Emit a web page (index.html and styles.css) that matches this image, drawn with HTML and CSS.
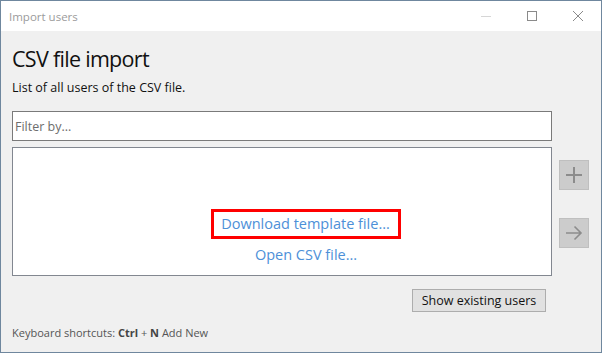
FILE: index.html
```html
<!DOCTYPE html>
<html lang="en">
<head>
  <meta charset="UTF-8" />
  <title>Import users</title>
  <link rel="stylesheet" href="styles.css">
</head>
<body>
  <div class="window">
    <div class="title-bar">
      <span class="title-text">Import users</span>
      <div class="win-controls">
        <span class="win-btn minimize"><svg width="12" height="12" viewBox="0 0 12 12"><line x1="1" y1="6.5" x2="11" y2="6.5" stroke="#d6d6d6" stroke-width="1"/></svg></span>
        <span class="win-btn"><svg width="12" height="12" viewBox="0 0 12 12"><rect x="1.5" y="1.5" width="9" height="9" fill="none" stroke="#8a8a8a" stroke-width="1"/></svg></span>
        <span class="win-btn"><svg width="12" height="12" viewBox="0 0 12 12"><path d="M1 1 L11 11 M11 1 L1 11" stroke="#8a8a8a" stroke-width="1"/></svg></span>
      </div>
    </div>

    <div class="content">
      <h1 class="heading">CSV file import</h1>
      <p class="subtitle">List of all users of the CSV file.</p>

      <div class="main-row">
        <div class="list-col">
          <div class="filter-box">Filter by...</div>
          <div class="list-box">
            <a class="link highlighted">Download template file...</a>
            <a class="link">Open CSV file...</a>
          </div>
        </div>
        <div class="side-col">
          <button class="side-btn">
            <svg width="20" height="20" viewBox="0 0 20 20"><path d="M10 2 V18 M2 10 H18" stroke="#8c8c8c" stroke-width="2"/></svg>
          </button>
          <button class="side-btn">
            <svg width="20" height="20" viewBox="0 0 20 20"><path d="M2 10 H17 M10.5 3.5 L17 10 L10.5 16.5" stroke="#8c8c8c" stroke-width="1.6" fill="none"/></svg>
          </button>
        </div>
      </div>

      <div class="action-row">
        <button class="plain-btn">Show existing users</button>
      </div>

      <div class="footer">Keyboard shortcuts: <b>Ctrl</b> + <b>N</b> Add New</div>
    </div>
  </div>
</body>
</html>
```

FILE: styles.css
```css
* {
  box-sizing: border-box;
}
body {
  margin: 0;
  font-family: "Segoe UI", "Open Sans", sans-serif;
  background-color: #f0f0f0;
}
.window {
  width: 602px;
  height: 353px;
  border: 1px solid #6f879e;
  display: flex;
  flex-direction: column;
  background-color: #f0f0f0;
}
.title-bar {
  height: 30px;
  background-color: #fff;
  display: flex;
  justify-content: space-between;
  align-items: center;
  padding-left: 8px;
}
.title-text {
  font-size: 11.5px;
  color: #9b9b9b;
}
.win-controls {
  display: flex;
  height: 100%;
}
.win-btn {
  width: 46px;
  display: flex;
  align-items: center;
  justify-content: center;
}
.content {
  flex: 1;
  padding: 0 11px;
  display: flex;
  flex-direction: column;
}
.heading {
  font-size: 21.5px;
  letter-spacing: -0.7px;
  font-weight: normal;
  color: #111;
  margin: 12px 0 0;
  line-height: 32px;
}
.subtitle {
  font-size: 12.5px;
  color: #111;
  margin: 4px 0 0;
  line-height: 18px;
}
.main-row {
  display: flex;
  gap: 7px;
  margin-top: 14px;
}
.list-col {
  width: 540px;
  display: flex;
  flex-direction: column;
  gap: 6px;
}
.filter-box {
  height: 30px;
  border: 1px solid #7a7a7a;
  background: #fff;
  font-size: 12.5px;
  color: #6d6d6d;
  padding-left: 2px;
  display: flex;
  align-items: center;
}
.list-box {
  height: 129px;
  border: 1px solid #828790;
  background: #fff;
  display: flex;
  flex-direction: column;
  align-items: center;
  justify-content: flex-end;
  padding-left: 48px;
  padding-bottom: 10px;
}
.link {
  font-size: 14.5px;
  color: #4d90d8;
  line-height: 20px;
}
.highlighted {
  border: 3px solid #f00;
  padding: 2px 8px 2px 7px;
  margin-bottom: 6px;
}
.side-col {
  display: flex;
  flex-direction: column;
  gap: 28px;
  padding-top: 49px;
}
.side-btn {
  width: 30px;
  height: 30px;
  padding: 0;
  background: #cccccc;
  border: 1px solid #bfbfbf;
  display: flex;
  align-items: center;
  justify-content: center;
}
.action-row {
  display: flex;
  justify-content: flex-end;
  margin-top: 13px;
  padding-right: 44px;
}
.plain-btn {
  width: 134px;
  height: 23px;
  padding: 0;
  background: #e1e1e1;
  border: 1px solid #adadad;
  font-family: inherit;
  font-size: 12.5px;
  color: #111;
}
.footer {
  margin-top: 13px;
  font-size: 11px;
  color: #555;
}
.footer b {
  color: #444;
}
```
